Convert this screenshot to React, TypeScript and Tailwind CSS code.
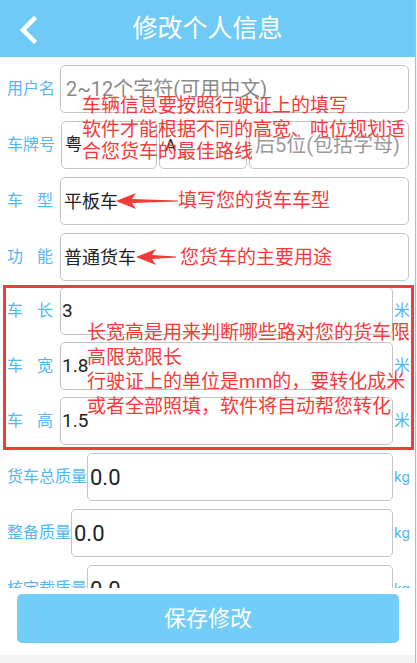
import React from "react";

const FONT = 'Roboto, "Noto Sans CJK SC", "Noto Sans", sans-serif';

function Box({ children, className = "" }: { children?: React.ReactNode; className?: string }) {
  return (
    <div
      className={
        "h-[48px] border-[1.5px] border-[#c4c4c4] rounded-[5px] bg-white flex items-center overflow-hidden " +
        className
      }
    >
      {children}
    </div>
  );
}

function Label2({ a, b }: { a: string; b: string }) {
  return (
    <div className="w-[46px] mr-[7px] flex justify-between text-[16px] leading-[20px] text-[#55b6f4] shrink-0">
      <span>{a}</span>
      <span>{b}</span>
    </div>
  );
}

function Arrow({ w }: { w: number }) {
  return (
    <svg width={w} height="18" viewBox={`0 0 ${w} 18`}>
      <polygon points={`0,9 20,1 16,7 ${w},8.4 ${w},9.6 16,11 20,17`} fill="#f53a3a" />
    </svg>
  );
}

export default function App() {
  return (
    <div className="relative w-[417px] h-[663px] overflow-hidden bg-white flex" style={{ fontFamily: FONT }}>
      <div className="w-[415px] flex flex-col">
        {/* header */}
        <div className="h-[57px] bg-[#6fcbf6] relative flex items-center justify-center shrink-0">
          <svg className="absolute left-[18px] top-[16px]" width="22" height="28" viewBox="0 0 22 28">
            <polyline points="16,3 5,14 16,25" fill="none" stroke="white" strokeWidth="4.5" strokeLinecap="square" />
          </svg>
          <span className="text-white text-[25px] leading-[30px]">修改个人信息</span>
        </div>

        {/* scroll area */}
        <div className="h-[531px] overflow-hidden pt-[8px] flex flex-col shrink-0">
          <div className="flex items-center pl-[7px] pr-[6px]">
            <div className="w-[53px] shrink-0 text-[16px] leading-[20px] text-[#55b6f4]">用户名</div>
            <Box className="flex-1 pl-[5px]">
              <span className="text-[20px] text-[#8a8a8a]">2~12个字符(可用中文)</span>
            </Box>
          </div>

          <div className="flex items-center pl-[7px] pr-[6px] mt-[8px]">
            <div className="w-[54px] shrink-0 text-[16px] leading-[20px] text-[#55b6f4]">车牌号</div>
            <div className="flex-1 flex gap-[2px]">
              <Box className="w-[96px] pl-[3px] items-start pt-[12px]">
                <span className="text-[17px] leading-[20px] text-[#222]">粤</span>
              </Box>
              <Box className="w-[88px] pl-[5px] items-start pt-[13px]">
                <span className="text-[17px] leading-[20px] text-[#222]">A</span>
              </Box>
              <Box className="flex-1 pl-[5px]">
                <span className="text-[20px] text-[#9a9a9a] whitespace-nowrap">后5位(包括字母)</span>
              </Box>
            </div>
          </div>

          <div className="flex items-center pl-[7px] pr-[6px] mt-[8px]">
            <Label2 a="车" b="型" />
            <Box className="flex-1 pl-[3px]">
              <span className="text-[18px] text-[#222]">平板车</span>
            </Box>
          </div>

          <div className="flex items-center pl-[7px] pr-[6px] mt-[8px]">
            <Label2 a="功" b="能" />
            <Box className="flex-1 pl-[3px]">
              <span className="text-[18px] text-[#222]">普通货车</span>
            </Box>
          </div>

          <div className="flex flex-col gap-[7px] mt-[6px]">
            {[
              ["长", "3"],
              ["宽", "1.8"],
              ["高", "1.5"],
            ].map(([b, v]) => (
              <div key={b} className="flex items-center pl-[7px] pr-[5px]">
                <Label2 a="车" b={b} />
                <Box className="flex-1 pl-[1px]">
                  <span className="text-[19px] text-[#222]">{v}</span>
                </Box>
                <span className="w-[17px] text-right text-[16px] text-[#55b6f4]">米</span>
              </div>
            ))}
          </div>

          <div className="flex flex-col gap-[8px] mt-[8px]">
            {[
              ["货车总质量", "w-[80px]"],
              ["整备质量", "w-[64px]"],
              ["核定载质量", "w-[80px]"],
            ].map(([l, w]) => (
              <div key={l} className="flex items-center pl-[7px] pr-[5px]">
                <div className={w + " shrink-0 text-[16px] leading-[20px] text-[#55b6f4] whitespace-nowrap"}>{l}</div>
                <Box className="flex-1 pl-[2px]">
                  <span className="text-[22px] text-[#222]">0.0</span>
                </Box>
                <span className="w-[17px] text-right text-[15px] text-[#55b6f4]">kg</span>
              </div>
            ))}
          </div>
        </div>

        {/* button area */}
        <div className="h-[67px] pt-[6px] px-[17px] bg-white shrink-0">
          <div className="w-[382px] h-[49px] rounded-[5px] bg-[#72cdf8] flex items-center justify-center">
            <span className="text-white text-[22px]">保存修改</span>
          </div>
        </div>
        <div className="flex-1 bg-[#f3f3f3]" />
      </div>
      <div className="w-px bg-[#b8b8b8]" />
      <div className="w-px bg-[#f4f4f4]" />

      {/* annotations */}
      <div className="absolute left-[82px] top-[95px] text-[19px] leading-[22px] text-[#f53a3a] whitespace-nowrap">
        车辆信息要按照行驶证上的填写
      </div>
      <div className="absolute left-[82px] top-[119px] text-[19px] leading-[22px] text-[#f53a3a] whitespace-nowrap">
        软件才能根据不同的高宽、吨位规划适
        <br />
        合您货车的最佳路线
      </div>
      <div className="absolute left-[116px] top-[192px]">
        <Arrow w={62} />
      </div>
      <div className="absolute left-[178px] top-[190px] text-[19px] leading-[22px] text-[#f53a3a] whitespace-nowrap">
        填写您的货车车型
      </div>
      <div className="absolute left-[136px] top-[248px]">
        <Arrow w={40} />
      </div>
      <div className="absolute left-[180px] top-[247px] text-[19px] leading-[22px] text-[#f53a3a] whitespace-nowrap">
        您货车的主要用途
      </div>
      <div className="absolute left-[3px] top-[285px] w-[411px] h-[165px] border-[3px] border-[#f33b3b]" />
      <div className="absolute left-[87px] top-[321px] text-[19px] leading-[24.7px] text-[#f53a3a] whitespace-nowrap">
        长宽高是用来判断哪些路对您的货车限
        <br />
        高限宽限长
        <br />
        行驶证上的单位是mm的，要转化成米
        <br />
        或者全部照填，软件将自动帮您转化
      </div>
    </div>
  );
}
